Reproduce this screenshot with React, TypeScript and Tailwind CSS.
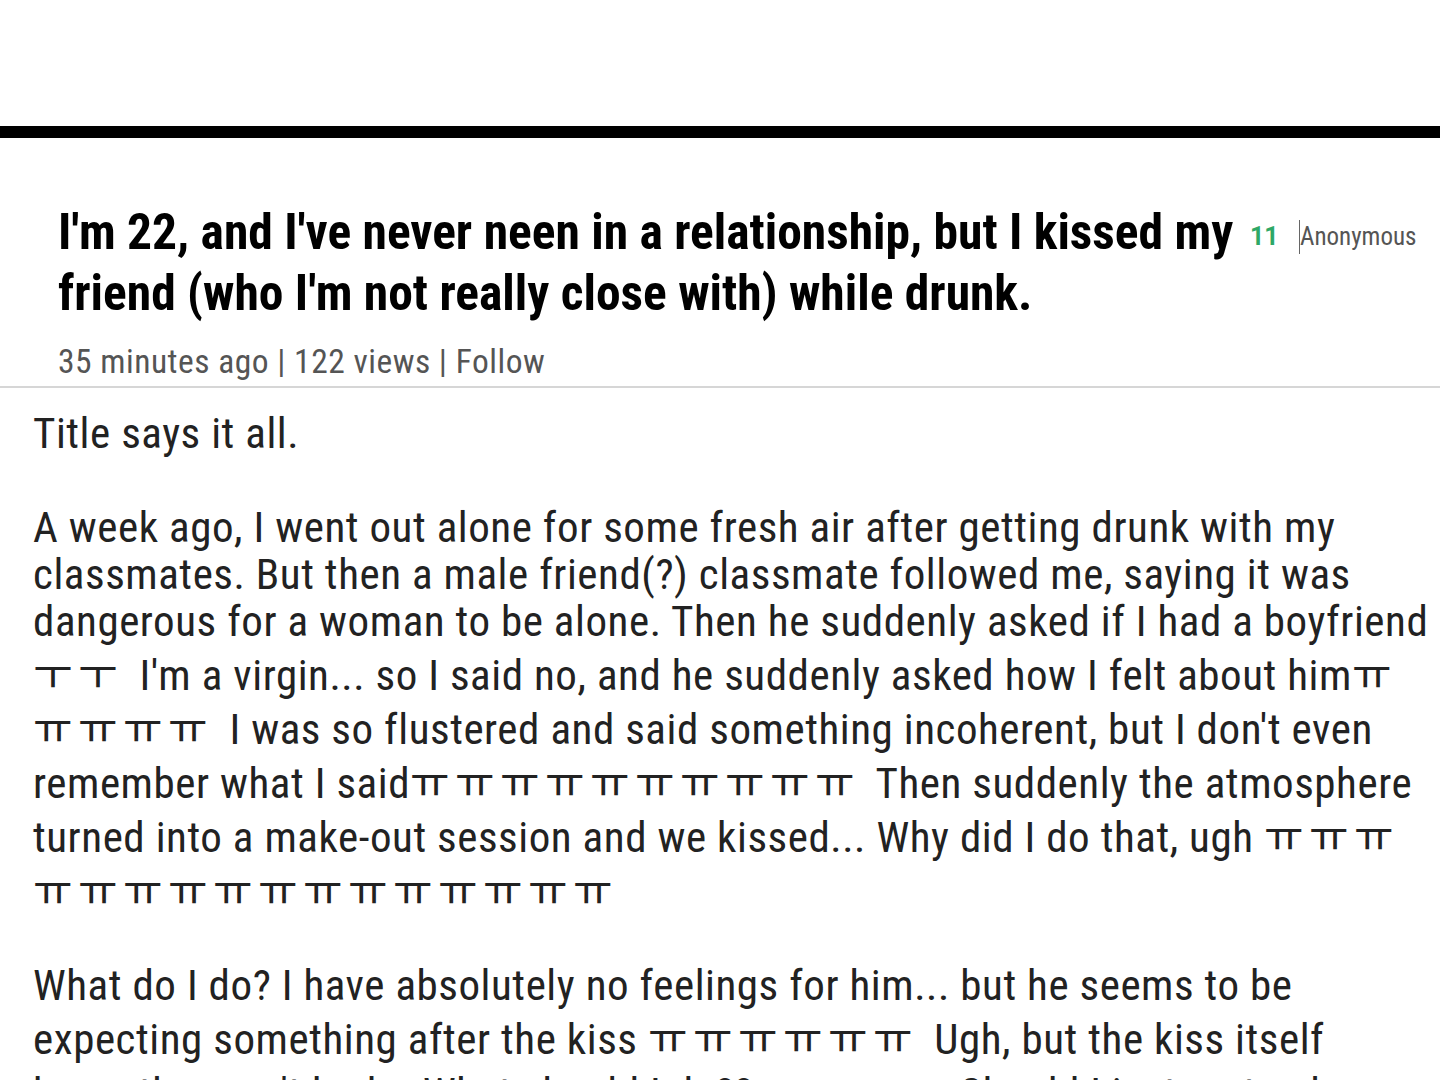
const FONT = "font-['Roboto','Noto_Sans_CJK_KR',sans-serif]";

// crying jamo, one cell each so the run wraps like the original
const Tears = ({ s }: { s: string }) => {
  const chars = Array.from(s);
  return (
    <>
      {chars.map((c, i) => (
        <span
          key={i}
          className={`inline-block pt-[7px] ${i === chars.length - 1 ? "w-[51px]" : "w-[45px]"}`}
        >
          {c}
        </span>
      ))}
    </>
  );
};

export default function App() {
  return (
    <div className={`h-[1080px] overflow-hidden bg-white ${FONT}`}>
      <div className="h-[126px]" />
      <div className="h-3 bg-black" />

      {/* header */}
      <div className="flex items-start pt-[64px] border-b-2 border-[#d6d6d6]">
        <div className="w-[1250px] shrink-0 pl-[58px] pr-[6px]">
          <h1 className="font-stretch-condensed font-bold text-[49.5px] leading-[61px] text-black">
            I'm 22, and I've never neen in a relationship, but I kissed my friend (who I'm not really close with) while drunk.
          </h1>
          <div className="mt-[18px] pb-[4px] font-stretch-condensed text-[33.5px] tracking-[0.5px] leading-[40px] text-[#555]">
            35 minutes ago | 122 views | Follow
          </div>
        </div>
        <div className="flex items-center pt-[16px]">
          <span className="font-bold text-[25px] text-[#2ea866] w-[49px]">11</span>
          <span className="h-[34px] w-px bg-[#666]" />
          <span className="font-stretch-condensed text-[25px] text-[#555]">Anonymous</span>
        </div>
      </div>

      {/* body */}
      <div className="pl-[33px] pr-[10px] pt-[22px] font-stretch-condensed text-[43px] tracking-[0.55px] leading-[47px] text-[#222]">
        <p>Title says it all.</p>
        <p className="mt-[47px]">
          A week ago, I went out alone for some fresh air after getting drunk with my classmates. But then a male friend(?) classmate followed me, saying it was dangerous for a woman to be alone. Then he suddenly asked if I had a boyfriend <Tears s="ㅜㅜ" /> I'm a virgin... so I said no, and he suddenly asked how I felt about him<Tears s="ㅠㅠㅠㅠㅠ" /> I was so flustered and said something incoherent, but I don't even remember what I said<Tears s="ㅠㅠㅠㅠㅠㅠㅠㅠㅠㅠ" /> Then suddenly the atmosphere turned into a make-out session and we kissed... Why did I do that, ugh <Tears s="ㅠㅠㅠㅠㅠㅠㅠㅠㅠㅠㅠㅠㅠㅠㅠㅠ" />
        </p>
        <p className="mt-[47px]">
          What do I do? I have absolutely no feelings for him... but he seems to be expecting something after the kiss <Tears s="ㅠㅠㅠㅠㅠㅠ" /> Ugh, but the kiss itself honestly wasn't bad... What should I do?? <Tears s="ㅠㅠㅠㅠ" /> Should I just pretend nothing happened?
        </p>
      </div>
    </div>
  );
}
